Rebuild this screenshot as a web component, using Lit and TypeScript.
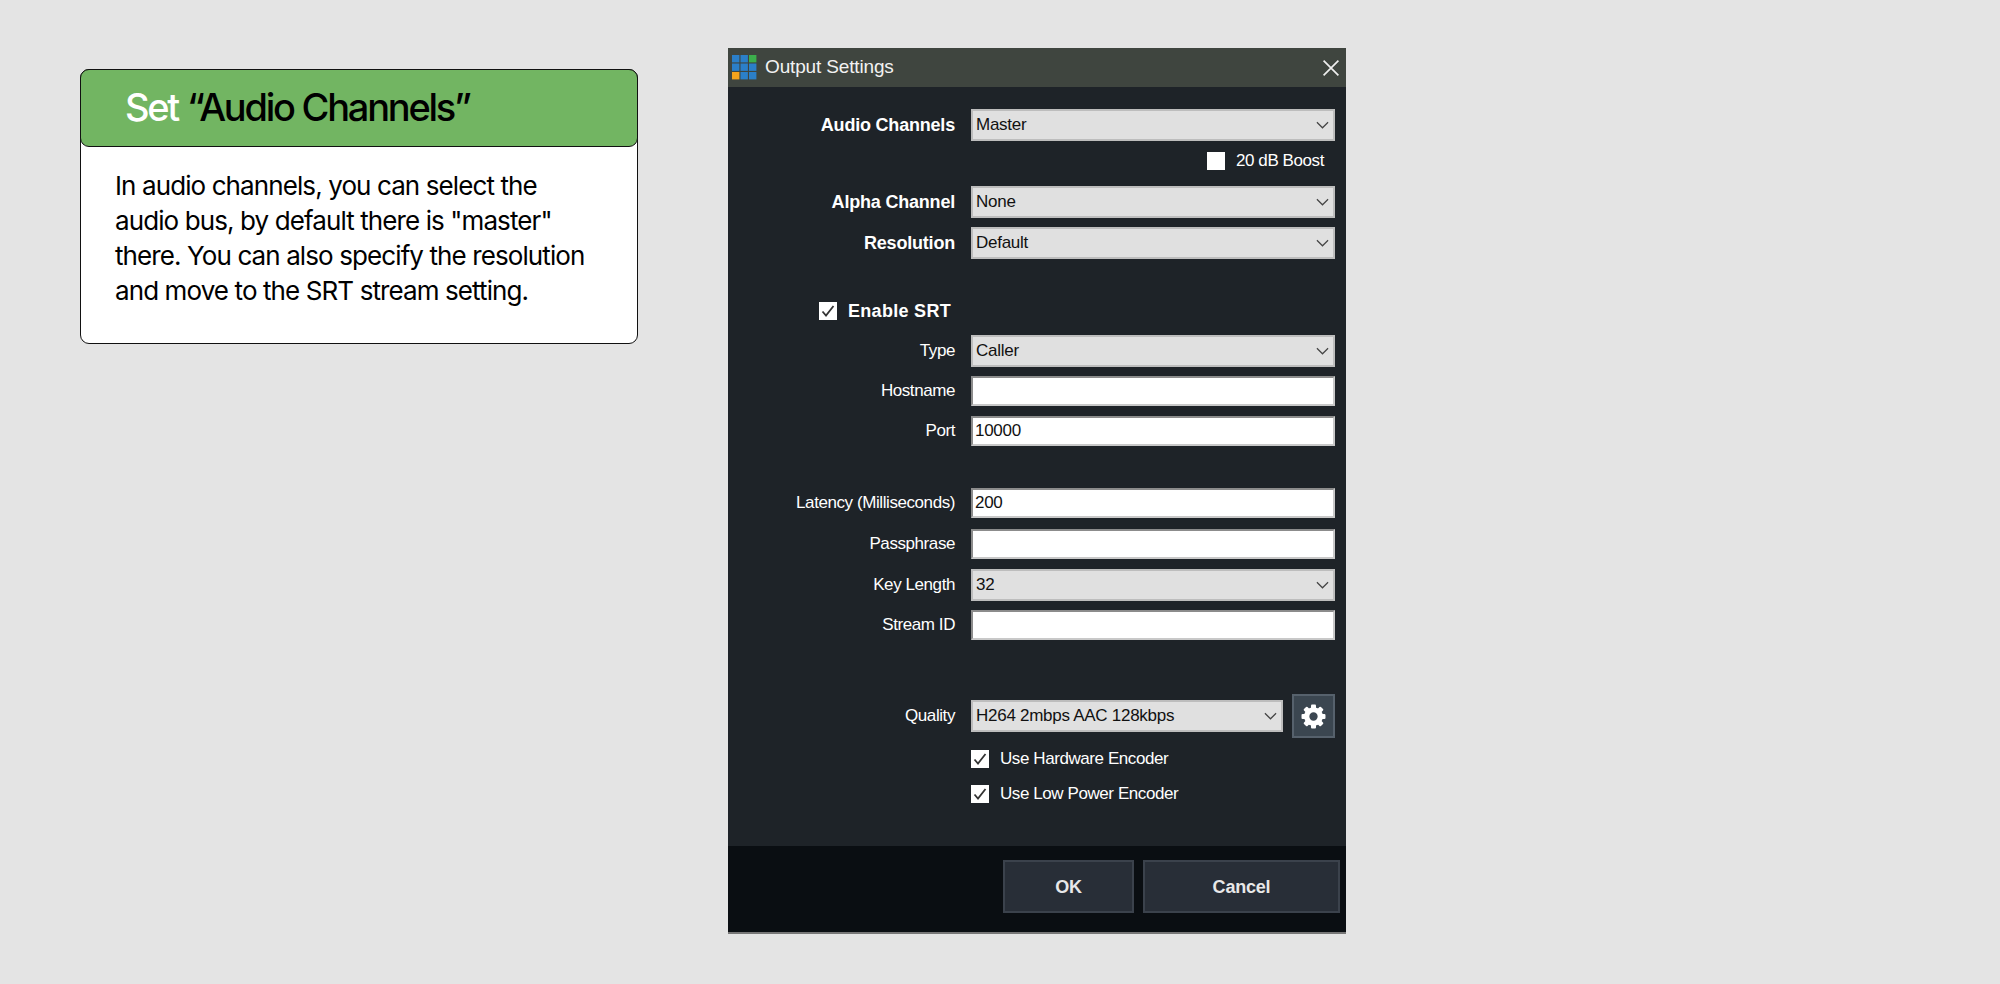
import { LitElement, html, css, svg } from 'lit';
import { customElement } from 'lit/decorators.js';

const chevron = html`<svg class="chev" viewBox="0 0 14 8"><path d="M1 1l6 6 6-6" fill="none" stroke="#444" stroke-width="1.3"/></svg>`;
const tick = html`<svg viewBox="0 0 18 18"><path d="M3.5 9.5l3.5 4 7.5-9.5" fill="none" stroke="#333" stroke-width="1.8"/></svg>`;
const teeth = [0, 45, 90, 135, 180, 225, 270, 315];

@customElement('app-root')
export class AppRoot extends LitElement {
  static styles = css`
    :host {
      display: block;
      height: 984px;
      background: #e4e4e4;
      font-family: 'Liberation Sans', sans-serif;
    }
    .page { display: flex; align-items: flex-start; }
    .card {
      width: 558px;
      height: 275px;
      margin: 69px 0 0 80px;
      box-sizing: border-box;
      background: #fff;
      border: 1.5px solid #111;
      border-radius: 9px;
      font-family: Inter, sans-serif;
      color: #000;
    }
    .card-head {
      height: 78px;
      margin: -1px -1px 0;
      box-sizing: border-box;
      padding: 0 0 2px 44px;
      display: flex;
      align-items: center;
      background: #72b562;
      border: 1.5px solid #111;
      border-radius: 9px;
      font-size: 38px;
      font-weight: 500;
      letter-spacing: -2.25px;
    }
    .card-head span { color: #fff; margin-right: 9px; }
    .card-body {
      margin: 21px 0 0 34px;
      font-size: 26px;
      line-height: 35px;
      letter-spacing: -0.9px;
      white-space: nowrap;
    }
    .dialog {
      width: 618px;
      height: 886px;
      margin: 48px 0 0 90px;
      background: #1e2328;
      color: #fff;
      font-size: 17px;
      display: flex;
      flex-direction: column;
      border-bottom: 2px solid #777;
      box-sizing: border-box;
    }
    .title {
      height: 39px;
      flex: none;
      background: #3f453f;
      display: flex;
      align-items: center;
      padding: 0 6px 0 4px;
      gap: 8px;
      font-size: 19px;
      letter-spacing: -0.15px;
      color: #f2f2f2;
    }
    .title span { padding-bottom: 2px; }
    .logo { width: 25px; height: 25px; }
    .close { width: 18px; height: 18px; margin-left: auto; }
    .form {
      flex: 1;
      padding: 22px 11px 0 0;
      display: flex;
      flex-direction: column;
    }
    .row {
      display: grid;
      grid-template-columns: 227px 1fr;
      column-gap: 16px;
      align-items: center;
    }
    .label { text-align: right; letter-spacing: -0.42px; }
    .strong { font-weight: 700; font-size: 18px; letter-spacing: -0.2px; color: #fff; }
    .select, .input {
      box-sizing: border-box;
      color: #111;
      display: flex;
      align-items: center;
      letter-spacing: -0.27px;
    }
    .select {
      height: 32px;
      background: #e0e0e0;
      border: 2px solid #bdbdbd;
      justify-content: space-between;
      padding: 0 4px 0 3px;
    }
    .input {
      height: 30px;
      background: #fff;
      border: 2px solid #8c8c8c;
      border-bottom-color: #c8c8c8;
      border-right-color: #c8c8c8;
      padding-left: 2px;
    }
    .chev { width: 13px; height: 8px; }
    .check { display: flex; align-items: center; gap: 11px; letter-spacing: -0.42px; }
    .box { width: 18px; height: 18px; background: #fff; flex: none; }
    .box svg { display: block; }
    .boost { justify-content: flex-end; padding: 0 11px 0 0; margin: 10px 0 15px; height: 20px; }
    .srt {
      margin: 41px 0 13px 91px;
      height: 22px;
      font-weight: 700;
      font-size: 18px;
      letter-spacing: 0.3px;
    }
    .quality { display: flex; align-items: center; gap: 9px; }
    .quality .select { flex: 1; }
    .gear {
      width: 43px;
      height: 44px;
      box-sizing: border-box;
      flex: none;
      background: #3b4650;
      border: 2px solid #56616c;
      display: flex;
      align-items: center;
      justify-content: center;
    }
    .gear svg { width: 25px; height: 25px; }
    .opts { margin: 11px 0 0 243px; display: flex; flex-direction: column; gap: 15px; }
    .opts .check { height: 20px; }
    .foot {
      height: 86px;
      flex: none;
      background: #0a0e12;
      box-sizing: border-box;
      padding: 14px 6px 0 0;
      display: flex;
      justify-content: flex-end;
      gap: 9px;
    }
    .btn {
      height: 53px;
      box-sizing: border-box;
      padding-top: 2px;
      background: #282e37;
      border: 2px solid #3b424c;
      display: flex;
      align-items: center;
      justify-content: center;
      font-weight: 700;
      font-size: 18px;
      letter-spacing: -0.2px;
      color: #e8e8e8;
    }
    .ok { width: 131px; }
    .cancel { width: 197px; }
  `;

  private select(value: string) {
    return html`<div class="select"><span>${value}</span>${chevron}</div>`;
  }

  private row(label: string, field: unknown, gap: number, strong = false) {
    return html`<div class="row" style="margin-bottom:${gap}px">
      <div class="label ${strong ? 'strong' : ''}">${label}</div>
      ${field}
    </div>`;
  }

  private input(value = '') {
    return html`<div class="input">${value}</div>`;
  }

  private logo() {
    const cells = [
      '#2b7fc9', '#2b7fc9', '#3cae4c',
      '#2b7fc9', '#2b7fc9', '#2b7fc9',
      '#f5a31c', '#2b7fc9', '#2b7fc9',
    ];
    return html`<svg class="logo" viewBox="0 0 25 25">
      ${cells.map(
        (c, i) => svg`<rect x=${(i % 3) * 8.5} y=${Math.floor(i / 3) * 8.5} width="7.4" height="7.4" fill=${c}></rect>`
      )}
    </svg>`;
  }

  render() {
    return html`
      <div class="page">
        <section class="card">
          <div class="card-head"><span>Set</span> “Audio Channels”</div>
          <div class="card-body">
            In audio channels, you can select the<br />
            audio bus, by default there is "master"<br />
            there. You can also specify the resolution<br />
            and move to the SRT stream setting.
          </div>
        </section>

        <section class="dialog">
          <div class="title">
            ${this.logo()}
            <span>Output Settings</span>
            <svg class="close" viewBox="0 0 17 17"><path d="M1.5 1.5l14 14M15.5 1.5l-14 14" stroke="#eee" stroke-width="1.6"/></svg>
          </div>
          <div class="form">
            ${this.row('Audio Channels', this.select('Master'), 0, true)}
            <div class="check boost"><div class="box"></div>20 dB Boost</div>
            ${this.row('Alpha Channel', this.select('None'), 9, true)}
            ${this.row('Resolution', this.select('Default'), 0, true)}
            <div class="check srt"><div class="box">${tick}</div>Enable SRT</div>
            ${this.row('Type', this.select('Caller'), 9)}
            ${this.row('Hostname', this.input(), 10)}
            ${this.row('Port', this.input('10000'), 42)}
            ${this.row('Latency (Milliseconds)', this.input('200'), 11)}
            ${this.row('Passphrase', this.input(), 10)}
            ${this.row('Key Length', this.select('32'), 9)}
            ${this.row('Stream ID', this.input(), 54)}
            ${this.row(
              'Quality',
              html`<div class="quality">
                ${this.select('H264 2mbps AAC 128kbps')}
                <div class="gear">
                  <svg viewBox="0 0 24 24">
                    <circle cx="12" cy="12" r="6.5" fill="none" stroke="#fff" stroke-width="5"></circle>
                    ${teeth.map(
                      (a) => svg`<rect x="9.6" y="0.5" width="4.8" height="6" rx="1" fill="#fff" transform="rotate(${a} 12 12)"></rect>`
                    )}
                  </svg>
                </div>
              </div>`,
              0
            )}
            <div class="opts">
              <div class="check"><div class="box">${tick}</div>Use Hardware Encoder</div>
              <div class="check"><div class="box">${tick}</div>Use Low Power Encoder</div>
            </div>
          </div>
          <div class="foot">
            <div class="btn ok">OK</div>
            <div class="btn cancel">Cancel</div>
          </div>
        </section>
      </div>
    `;
  }
}
